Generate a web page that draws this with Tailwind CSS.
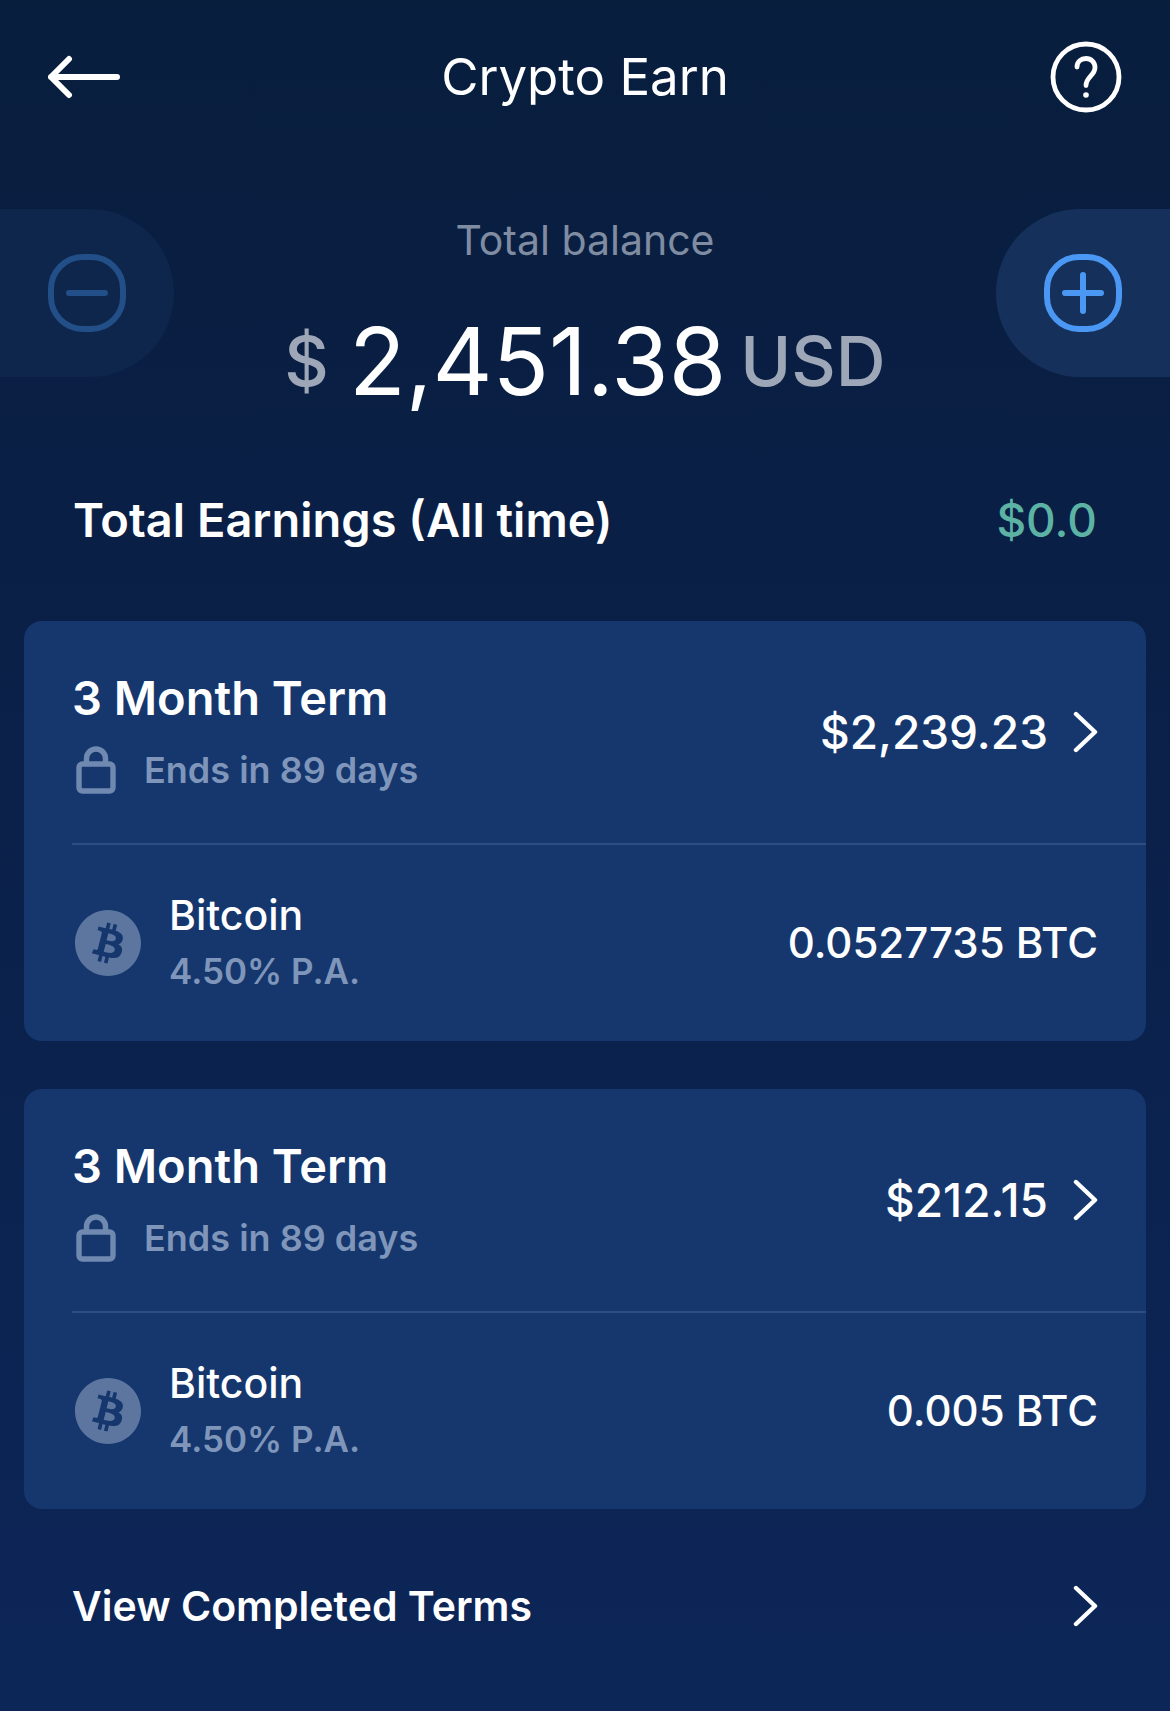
<!DOCTYPE html>
<html lang="en">
<head>
  <meta charset="UTF-8" />
  <meta name="viewport" content="width=device-width, initial-scale=1.0" />
  <title>Crypto Earn</title>
  <script src="https://cdn.jsdelivr.net/npm/@tailwindcss/browser@4"></script>
</head>
<body class="min-h-screen bg-linear-to-b from-[#081e3d] via-[#0a1f45] via-30% to-[#0c2658] font-[Inter,'Liberation_Sans',sans-serif] text-white">

  <!-- Shared icons -->
  <svg class="hidden" aria-hidden="true">
    <symbol id="chevron" viewBox="0 0 26 44">
      <path d="M4 4 L23 22 L4 40" fill="none" stroke="currentColor" stroke-width="4.4" stroke-linecap="round" stroke-linejoin="round" />
    </symbol>
    <symbol id="lock" viewBox="0 0 40 48">
      <rect x="3" y="18" width="34" height="27" rx="3.5" fill="none" stroke="currentColor" stroke-width="5.4" />
      <path d="M10.500 18 V12.500 a9.500 9.500 0 0 1 19 0 V18" fill="none" stroke="currentColor" stroke-width="5.4" />
    </symbol>
    <symbol id="btc" viewBox="0 0 32 32">
      <path fill="currentColor" fill-rule="evenodd" d="M16 32C7.163 32 0 24.837 0 16S7.163 0 16 0s16 7.163 16 16-7.163 16-16 16zm7.189-17.98c.314-2.096-1.283-3.223-3.465-3.975l.708-2.84-1.728-.43-.69 2.765c-.454-.114-.92-.22-1.385-.326l.695-2.783L15.596 6l-.708 2.839c-.376-.086-.746-.17-1.104-.26l.002-.009-2.384-.595-.46 1.846s1.283.294 1.256.312c.7.175.826.638.805 1.006l-.806 3.235c.048.012.11.03.18.057l-.183-.045-1.13 4.532c-.086.212-.303.531-.793.41.018.025-1.256-.313-1.256-.313l-.858 1.978 2.25.561c.418.105.828.215 1.231.318l-.715 2.872 1.727.43.708-2.84c.472.127.93.245 1.378.357l-.706 2.828 1.728.43.715-2.866c2.948.558 5.164.333 6.097-2.333.752-2.146-.037-3.385-1.588-4.192 1.13-.26 1.98-1.003 2.207-2.538zm-3.95 5.538c-.533 2.147-4.148.986-5.32.695l.95-3.805c1.172.293 4.929.872 4.37 3.11zm.535-5.569c-.487 1.953-3.495.96-4.47.717l.86-3.45c.975.243 4.118.696 3.61 2.733z" />
    </symbol>
  </svg>

  <header class="flex h-[154px] items-center justify-between px-12">
    <button type="button" aria-label="Back" class="w-[72px]">
      <svg class="h-11 w-[72px]" viewBox="0 0 72 44" fill="none" stroke="currentColor" stroke-width="6" stroke-linecap="round" stroke-linejoin="round">
        <path d="M69 22 H3 M21 4 L3 22 L21 40" />
      </svg>
    </button>
    <h1 class="text-[51px] leading-[62px]">Crypto Earn</h1>
    <button type="button" aria-label="Help" class="w-[72px]">
      <svg class="size-[72px]" viewBox="0 0 72 72" fill="none" stroke="currentColor" stroke-linecap="round" stroke-linejoin="round">
        <circle cx="36" cy="36" r="33" stroke-width="4.8" />
        <path d="M27 26 C27 20.500 31 17.500 36 17.500 C41 17.500 45 21 45 26.500 C45 34.500 36 36 36 44.500" stroke-width="4.8" />
        <circle cx="36" cy="54" r="2.800" fill="currentColor" stroke="none" />
      </svg>
    </button>
  </header>

  <main>
    <!-- Balance -->
    <section class="flex items-start justify-between pt-[55px]">
      <button type="button" aria-label="Withdraw" class="flex h-[168px] w-[174px] items-center justify-end rounded-r-[84px] bg-[#0e264c] pr-12 text-[#234f88]">
        <svg class="size-[78px]" viewBox="0 0 78 78" fill="none" stroke="currentColor" stroke-width="6" stroke-linecap="round">
          <rect x="3" y="3" width="72" height="72" rx="32" />
          <path d="M21 39 H57" />
        </svg>
      </button>
      <div class="flex flex-col items-center gap-[38px] pt-1">
        <h2 class="text-[41px] leading-[54px] text-[#808ca2]">Total balance</h2>
        <p class="flex items-center text-[93px] leading-[112px]">
          <span class="mr-5 text-[69px] font-medium text-[#9ea7b7]">$</span>
          2,451.38
          <span class="ml-3.5 text-[69px] font-medium text-[#9ea7b7]">USD</span>
        </p>
      </div>
      <button type="button" aria-label="Deposit" class="flex h-[168px] w-[174px] items-center rounded-l-[84px] bg-[#15315b] pl-12 text-[#4a98f4]">
        <svg class="size-[78px]" viewBox="0 0 78 78" fill="none" stroke="currentColor" stroke-width="6" stroke-linecap="round">
          <rect x="3" y="3" width="72" height="72" rx="32" />
          <path d="M21 39 H57 M39 21 V57" />
        </svg>
      </button>
    </section>

    <section class="mt-[73px] flex items-center justify-between px-[73px] leading-[60px]">
      <h2 class="text-[47px] font-semibold">Total Earnings (All time)</h2>
      <p class="text-[46px] font-medium text-[#5cb3a4]">$0.0</p>
    </section>

    <!-- Terms -->
    <section class="mt-[71px] flex flex-col gap-12 px-6">
      <article class="rounded-[18px] bg-[#15376e] pl-12">
        <a href="#" class="flex items-center justify-between border-b-2 border-[#2d4c81] py-[45px] pr-12">
          <div class="pt-0.5">
            <h3 class="text-[47px] leading-[60px] font-semibold">3 Month Term</h3>
            <p class="mt-3.5 flex items-center gap-7 text-[36px] leading-[56px] font-semibold text-[#7f96ba]">
              <svg class="ml-1 h-12 w-10 text-[#7089b1]"><use href="#lock" /></svg>
              Ends in 89 days
            </p>
          </div>
          <div class="flex items-center gap-6 text-[46px] leading-[60px] font-medium">
            $2,239.23
            <svg class="h-11 w-[26px]"><use href="#chevron" /></svg>
          </div>
        </a>
        <div class="flex items-center justify-between py-[42px] pr-12">
          <div class="flex items-center gap-7">
            <svg class="ml-[3px] size-[66px] text-[#5d769f]"><use href="#btc" /></svg>
            <div class="leading-[56px]">
              <h4 class="text-[41px] font-medium">Bitcoin</h4>
              <p class="text-[35px] font-semibold text-[#7f96ba]">4.50% P.A.</p>
            </div>
          </div>
          <p class="text-[42px] leading-[56px] font-medium">0.0527735 BTC</p>
        </div>
      </article>

      <article class="rounded-[18px] bg-[#15376e] pl-12">
        <a href="#" class="flex items-center justify-between border-b-2 border-[#2d4c81] py-[45px] pr-12">
          <div class="pt-0.5">
            <h3 class="text-[47px] leading-[60px] font-semibold">3 Month Term</h3>
            <p class="mt-3.5 flex items-center gap-7 text-[36px] leading-[56px] font-semibold text-[#7f96ba]">
              <svg class="ml-1 h-12 w-10 text-[#7089b1]"><use href="#lock" /></svg>
              Ends in 89 days
            </p>
          </div>
          <div class="flex items-center gap-6 text-[46px] leading-[60px] font-medium">
            $212.15
            <svg class="h-11 w-[26px]"><use href="#chevron" /></svg>
          </div>
        </a>
        <div class="flex items-center justify-between py-[42px] pr-12">
          <div class="flex items-center gap-7">
            <svg class="ml-[3px] size-[66px] text-[#5d769f]"><use href="#btc" /></svg>
            <div class="leading-[56px]">
              <h4 class="text-[41px] font-medium">Bitcoin</h4>
              <p class="text-[35px] font-semibold text-[#7f96ba]">4.50% P.A.</p>
            </div>
          </div>
          <p class="text-[42px] leading-[56px] font-medium">0.005 BTC</p>
        </div>
      </article>
    </section>

    <a href="#" class="mt-[67px] flex items-center justify-between px-[72px] pb-[72px] text-[41px] leading-[60px] font-semibold">
      View Completed Terms
      <svg class="h-11 w-[26px]"><use href="#chevron" /></svg>
    </a>
  </main>
</body>
</html>
